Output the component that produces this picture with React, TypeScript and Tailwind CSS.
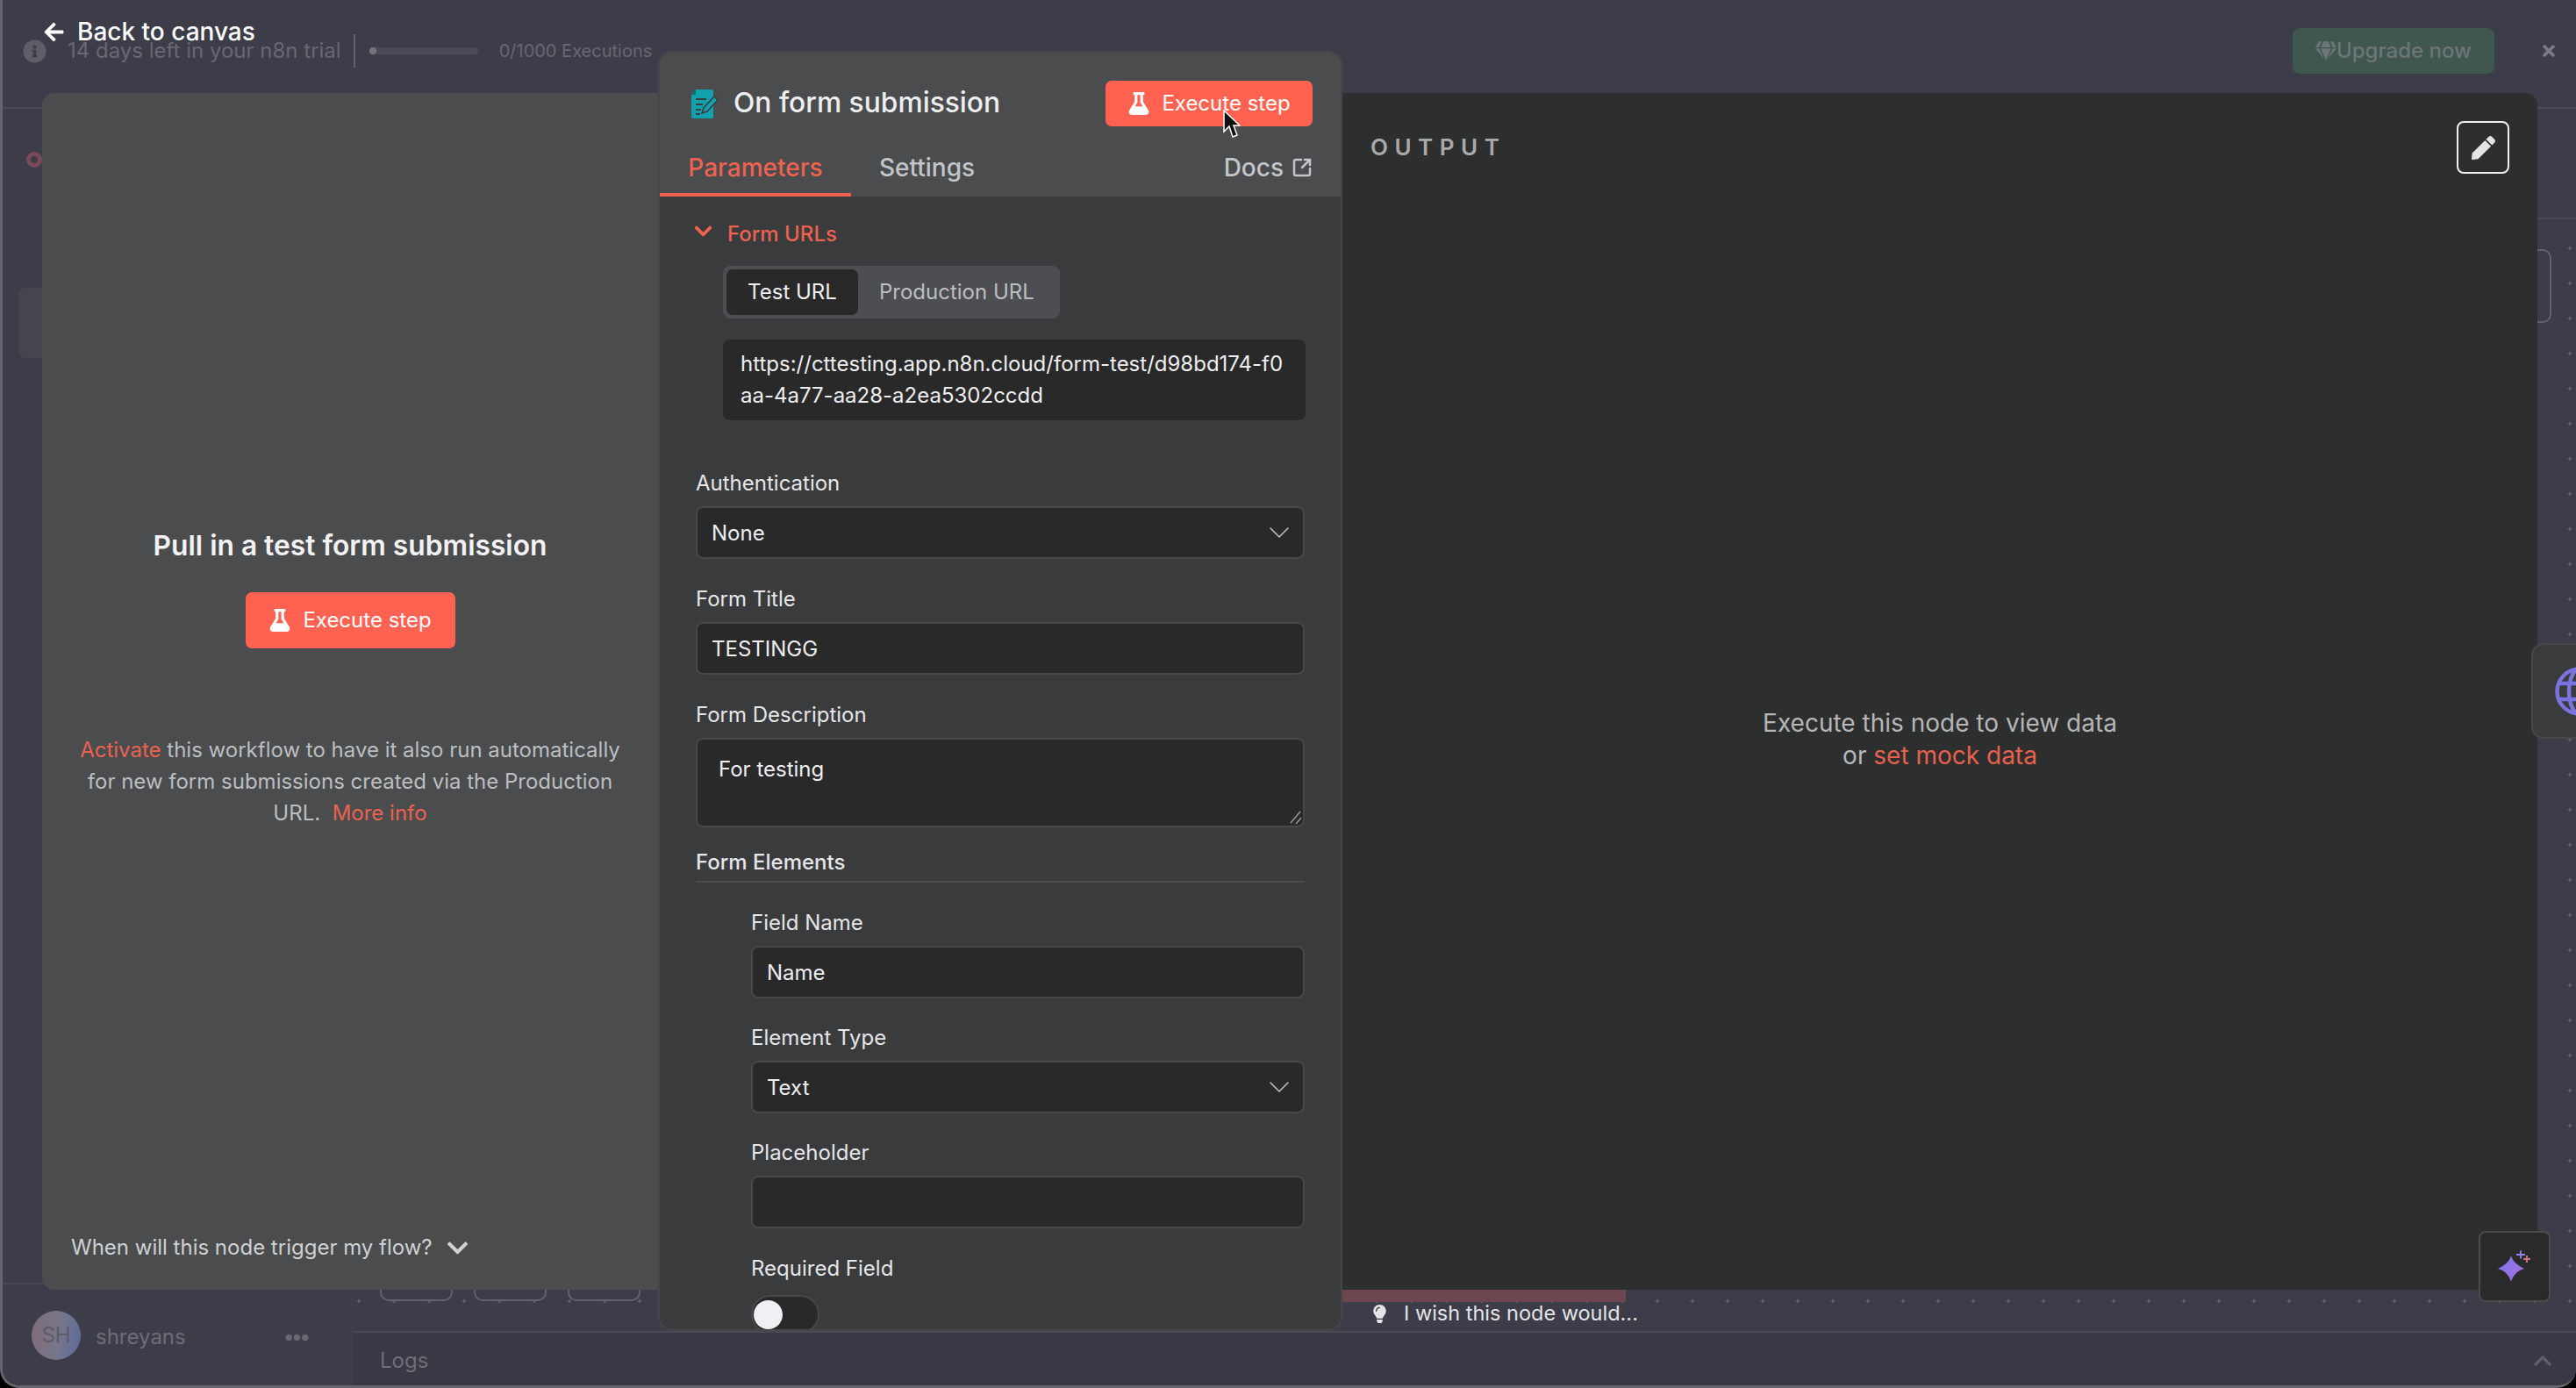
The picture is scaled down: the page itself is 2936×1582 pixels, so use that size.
import { ChevronDown, ChevronUp, SquareArrowOutUpRight } from "lucide-react";
import {
  FaArrowLeft,
  FaChevronDown,
  FaEllipsisH,
  FaFlask,
  FaGem,
  FaInfoCircle,
  FaLightbulb,
  FaPen,
  FaTimes,
} from "react-icons/fa";

function FieldLabel({ text, top }: { text: string; top: string }) {
  return (
    <div className={`flex h-[36px] items-center text-[24px] text-[#e6e6e8] ${top}`}>{text}</div>
  );
}

function TextBox({ value, select }: { value: string; select?: boolean }) {
  return (
    <div className="mt-[8px] flex h-[60px] items-center justify-between rounded-[8px] border-2 border-[#47484a] bg-[#29292a] pl-[16px] pr-[7px] text-[24px] text-[#eeeef0]">
      <span className="pt-[2px]">{value}</span>
      {select && <ChevronDown size={40} strokeWidth={0.9} className="text-[#c4c4c6]" />}
    </div>
  );
}

function ExecuteButton({ size }: { size: "sm" | "lg" }) {
  return (
    <button
      type="button"
      className={`flex items-center justify-center gap-[13px] rounded-[7px] bg-[#ff6250] text-[24px] text-white ${
        size === "sm" ? "h-[52px] w-[236px]" : "h-[64px] w-[239px]"
      }`}
    >
      <FaFlask size={26} />
      Execute step
    </button>
  );
}

function NodeIcon() {
  return (
    <svg width="32" height="33" viewBox="0 0 32 33">
      <path d="M5 0h18a2 2 0 0 1 2 2v29a2 2 0 0 1-2 2H2a2 2 0 0 1-2-2V6z" fill="#12a2ad" />
      <path d="M0 6h5V0z" fill="#0b6f78" />
      <path d="M5 11h12M5 17h8M5 23h6M5 28h5" stroke="#3a3b3d" strokeWidth="2" />
      <path d="M12 27l2-6L26 8l4 4-12 13z" fill="#12a2ad" stroke="#3a3b3d" strokeWidth="1.6" />
    </svg>
  );
}

function Sparkle() {
  return (
    <svg width="38" height="37" viewBox="0 0 38 37">
      <defs>
        <linearGradient id="sparkle" x1="0" y1="0" x2="1" y2="1">
          <stop offset="0" stopColor="#6f78f0" />
          <stop offset="1" stopColor="#b56de0" />
        </linearGradient>
      </defs>
      <path d="M15 6C17 13 22 17 30 21C22 23 17 29 15 36C13 29 8 23 0 21C8 17 13 13 15 6z" fill="url(#sparkle)" />
      <path d="M21 5h10M26 0.500v9" stroke="#8f86f0" strokeWidth="1.800" />
      <path d="M29 10h8M33 6v8" stroke="#d0708e" strokeWidth="2" />
    </svg>
  );
}

function GlobeIcon() {
  return (
    <svg width="56" height="56" viewBox="0 0 56 56" fill="none" stroke="#7a74e0" strokeWidth="4.500" className="shrink-0">
      <circle cx="28" cy="28" r="25.500" />
      <ellipse cx="28" cy="28" rx="12" ry="25.500" />
      <path d="M5 19h46M5 37h46" />
    </svg>
  );
}

function Cursor() {
  return (
    <svg width="20" height="33" viewBox="0 0 20 33">
      <path d="M1 1v24l6-6 4 12 5-2-4-11h7z" fill="#111" stroke="#fff" strokeWidth="1.500" />
    </svg>
  );
}

function Background() {
  return (
    <div className="flex h-full flex-col">
      <div className="flex h-[124px] shrink-0 border-b-2 border-[#4a4956]">
        <div className="flex h-[116px] flex-1 items-center pl-[23px] text-[24px] text-[#686772]">
          <FaInfoCircle size={27} className="text-[#5f5e68]" />
          <span className="ml-[24px]">14 days left in your n8n trial</span>
          <div className="ml-[14px] h-[38px] w-[2px] bg-[#63626c]" />
          <div className="ml-[16px] h-[8px] w-[124px] rounded-full bg-[#4a4955]">
            <div className="h-[8px] w-[8px] rounded-full bg-[#777680]" />
          </div>
          <span className="ml-[24px] text-[20px]">0/1000 Executions</span>
        </div>
        <div className="flex h-[116px] items-center gap-[52px] pr-[21px]">
          <div className="flex h-[52px] w-[230px] items-center justify-center rounded-[8px] bg-[#40574f] text-[24px] font-medium text-[#6d7578]">
            <FaGem size={24} />
            Upgrade now
          </div>
          <FaTimes size={20} className="text-[#7b7a85]" />
        </div>
      </div>
      <div className="flex min-h-0 flex-1">
        <div className="flex w-[397px] shrink-0 flex-col bg-[#3d3c49]">
          <div className="ml-[27px] mt-[49px] h-[18px] w-[18px] rounded-full border-[5px] border-[#7a4a58]" />
          <div className="ml-[19px] mt-[137px] h-[80px] w-[30px] rounded-[6px] bg-[#45444f]" />
          <div className="mt-auto flex h-[117px] items-start border-t-2 border-[#474653] pl-[33px] pt-[30px]">
            <div className="flex h-[56px] w-[56px] items-center justify-center rounded-full bg-[linear-gradient(100deg,#7f6c78,#77768a_55%,#5a6a9c)] text-[24px] text-[#5c5a68]">
              SH
            </div>
            <span className="ml-[17px] text-[24px] leading-[60px] text-[#6d6c77]">shreyans</span>
            <FaEllipsisH size={27} className="ml-[113px] mt-[17px] text-[#686772]" />
          </div>
        </div>
        <div className="relative flex flex-1 flex-col border-l-2 border-[#3f3e4b]">
          <div className="h-[126px] shrink-0 border-b-2 border-[#4a4956]" />
          <div className="relative flex-1 bg-[radial-gradient(circle,#615f6d_1.500px,transparent_2px)] bg-[length:40px_40px] bg-[position:-13px_13px]">
            <div className="absolute left-[2300px] top-[34px] h-[84px] w-[206px] rounded-[10px] border-2 border-[#62616d]" />
            <div className="absolute bottom-[34px] left-[31px] flex gap-[24px]">
              <div className="h-[60px] w-[83px] rounded-[10px] border-2 border-[#62616d]" />
              <div className="h-[60px] w-[83px] rounded-[10px] border-2 border-[#62616d]" />
              <div className="h-[60px] w-[83px] rounded-[10px] border-2 border-[#62616d]" />
            </div>
          </div>
          <div className="flex h-[62px] shrink-0 items-center justify-between border-t-2 border-[#4a4956] bg-[#393844] pl-[31px] pr-[22px] pt-[4px] text-[24px] text-[#6f6e78]">
            Logs
            <ChevronUp size={32} strokeWidth={2.500} className="text-[#5e5d68]" />
          </div>
        </div>
      </div>
    </div>
  );
}

function LeftPanel() {
  return (
    <div className="mt-[48px] flex h-[1364px] w-[702px] shrink-0 flex-col items-center rounded-l-[14px] bg-[#4a4c4e] text-center">
      <h2 className="mt-[494px] text-[31.75px] font-semibold leading-[44px] text-[#f2f2f4]">
        Pull in a test form submission
      </h2>
      <div className="mt-[31px]">
        <ExecuteButton size="lg" />
      </div>
      <p className="mt-[98px] w-[630px] text-[24px] leading-[36px] text-[#bcbec0]">
        <span className="text-[#ea6350]">Activate</span> this workflow to have it also run automatically for new form
        submissions created via the Production URL.&nbsp; <span className="text-[#ea6350]">More info</span>
      </p>
      <div className="mb-[30px] mt-auto flex w-full items-center gap-[15px] pl-[33px] text-[24px] text-[#d0d1d3]">
        When will this node trigger my flow?
        <FaChevronDown size={27} />
      </div>
    </div>
  );
}

function CenterPanel() {
  return (
    <div className="relative z-10 flex h-[1459px] w-[780px] shrink-0 flex-col overflow-hidden rounded-[16px] border-2 border-[#454648] bg-[#3a3b3d]">
      <div className="h-[164px] shrink-0 bg-[#4a4c4e]">
        <div className="flex h-[102px] items-center justify-between pl-[36px] pr-[32px] pt-[14px]">
          <div className="flex items-center gap-[16px]">
            <NodeIcon />
            <span className="-mt-[2px] text-[31.75px] font-medium text-[#eeeef0]">On form submission</span>
          </div>
          <ExecuteButton size="sm" />
        </div>
        <div className="flex h-[62px] items-start justify-between pr-[32px] text-[28px]">
          <div className="flex">
            <div className="flex h-[62px] w-[218px] justify-center border-b-4 border-[#f0604e] pt-[8px] font-medium text-[#ee6250]">
              Parameters
            </div>
            <div className="ml-[32px] pt-[8px] font-medium text-[#c4c5c8]">Settings</div>
          </div>
          <div className="flex items-center gap-[9px] pt-[8px] font-medium text-[#c4c5c8]">
            Docs
            <SquareArrowOutUpRight size={24} strokeWidth={2.500} />
          </div>
        </div>
      </div>
      <div className="min-h-0 flex-1 overflow-hidden pl-[41px] pr-[41px]">
        <div className="-ml-[3px] mt-[25px] flex h-[36px] items-center gap-[19px] text-[24px] font-medium text-[#ee6250]">
          <FaChevronDown size={23} className="-mt-[8px] -mr-[3px]" />
          Form URLs
        </div>
        <div className="ml-[31px] mt-[18px] flex h-[60px] w-[384px] items-center rounded-[8px] bg-[#4d4e52] p-[4px] text-[24px]">
          <div className="flex h-[52px] w-[150px] items-center justify-center rounded-[7px] bg-[#29292a] text-[#eeeef0]">
            Test URL
          </div>
          <div className="ml-[24px] text-[#bdbec1]">Production URL</div>
        </div>
        <div className="ml-[31px] mt-[24px] h-[92px] w-[664px] rounded-[8px] bg-[#29292a] px-[20px] py-[10px] text-[24px] leading-[36px] text-[#eeeef0]">
          https://cttesting.app.n8n.cloud/form-test/d98bd174-f0
          <br />
          aa-4a77-aa28-a2ea5302ccdd
        </div>

        <FieldLabel text="Authentication" top="mt-[54px]" />
        <TextBox value="None" select />
        <FieldLabel text="Form Title" top="mt-[28px]" />
        <TextBox value="TESTINGG" />
        <FieldLabel text="Form Description" top="mt-[28px]" />
        <div className="relative mt-[8px] h-[102px] rounded-[8px] border-2 border-[#47484a] bg-[#29292a] pl-[24px] pt-[16px] text-[24px] leading-[36px] text-[#eeeef0]">
          For testing
          <svg width="14" height="16" viewBox="0 0 14 16" className="absolute bottom-[1px] right-[1px]">
            <path d="M1 14L12 1M7 15l6-7" stroke="#9a9a9c" strokeWidth="1.500" />
          </svg>
        </div>
        <div className="mt-[22px] flex h-[36px] items-center text-[24px] font-medium text-[#e6e6e8]">Form Elements</div>
        <div className="mt-[3px] h-[2px] bg-[#4d4e50]" />
        <div className="pl-[63px]">
          <FieldLabel text="Field Name" top="mt-[28px]" />
          <TextBox value="Name" />
          <FieldLabel text="Element Type" top="mt-[27px]" />
          <TextBox value="Text" select />
          <FieldLabel text="Placeholder" top="mt-[27px]" />
          <TextBox value="" />
          <FieldLabel text="Required Field" top="mt-[28px]" />
          <div className="mt-[12px] flex h-[44px] w-[78px] items-center rounded-full border-2 border-[#47484a] bg-[#29292a] pl-[1px]">
            <div className="h-[33px] w-[33px] rounded-full bg-[#eff0f4]" />
          </div>
        </div>
      </div>
    </div>
  );
}

function RightPanel() {
  return (
    <div className="mt-[48px] flex w-[1362px] shrink-0 flex-col">
      <div className="flex h-[1364px] shrink-0 flex-col rounded-r-[14px] bg-[#2d2f2e]">
        <div className="flex items-start justify-between pl-[32px] pr-[32px] pt-[32px]">
          <span className="mt-[10px] text-[26px] font-semibold tracking-[7.5px] text-[#a9a9a9]">OUTPUT</span>
          <div className="flex h-[60px] w-[60px] items-center justify-center rounded-[8px] border-2 border-[#eeeeee] text-[#e4e4e4]">
            <FaPen size={27} />
          </div>
        </div>
        <div className="flex flex-1 flex-col items-center pt-[608px] text-[28px] leading-[37px] text-[#b6b6b8]">
          <span>Execute this node to view data</span>
          <span>
            or <span className="text-[#e8604e]">set mock data</span>
          </span>
        </div>
      </div>
      <div className="h-[14px] w-[323px] shrink-0 bg-[#6e4650]" />
      <div className="flex h-[26px] items-center gap-[17px] pl-[32px] text-[23.5px] text-[#e4e4e6]">
        <FaLightbulb size={21} />
        I wish this node would...
      </div>
    </div>
  );
}

export default function App() {
  return (
    <div className="relative h-[1582px] w-[2936px] overflow-hidden bg-black font-['Inter',sans-serif]">
      <div className="h-full overflow-hidden rounded-b-[22px] border-b-[3px] border-l-[3px] border-[#66656e] bg-[#3d3c49]">
        <Background />
      </div>

      {/* modal sits over the dimmed canvas */}
      <div className="absolute left-[48px] top-[58px] flex">
        <LeftPanel />
        <CenterPanel />
        <RightPanel />
      </div>

      <div className="absolute left-[49px] top-[16px] flex h-[40px] items-center gap-[14px] text-[28px] font-medium text-white">
        <FaArrowLeft size={25} />
        Back to canvas
      </div>

      <div className="absolute left-[2885px] top-[733px] flex h-[109px] w-[60px] items-center rounded-l-[14px] border-2 border-[#47484a] bg-[#3a3b3d] pl-[25px]">
        <GlobeIcon />
      </div>

      <div className="absolute left-[2825px] top-[1403px] flex h-[81px] w-[82px] items-center justify-center rounded-[8px] border-2 border-[#4a4a4c] bg-[#2a2a2b]">
        <Sparkle />
      </div>

      <div className="absolute left-[1394px] top-[125px] z-20">
        <Cursor />
      </div>
    </div>
  );
}
